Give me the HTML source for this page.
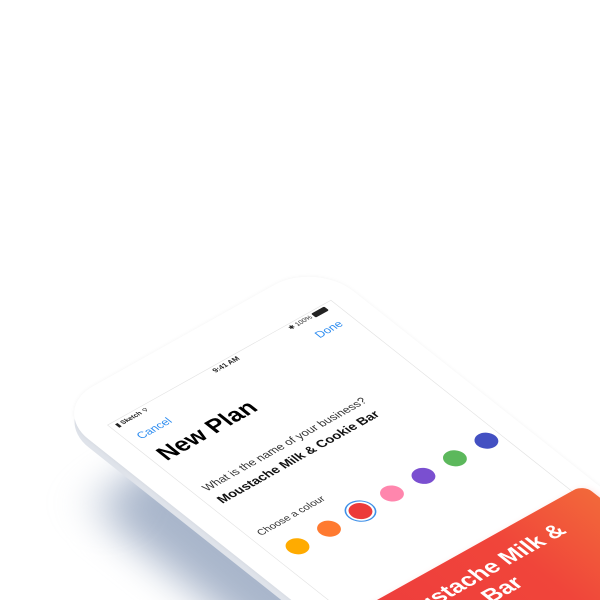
<!DOCTYPE html>
<html><head><style>
html,body{margin:0;padding:0;width:600px;height:600px;overflow:hidden;background:#fff;font-family:"Liberation Sans",sans-serif}
#v{position:relative;width:600px;height:600px;overflow:hidden}
#w{position:absolute;left:107px;top:425px;width:0;height:0;transform-origin:0 0;transform:matrix(0.594,-0.332,0.53,0.42,0,0)}
.a{position:absolute;white-space:nowrap}
.c{position:absolute;width:30px;height:30px;border-radius:50%;top:303px}
</style></head><body>
<div id="v">
<div id="w">
 <div class="a" style="left:-10px;top:-20px;width:420px;height:900px;border-radius:70px;background:#a9b6cb;filter:blur(30px);transform:translate(-110px,110px)"></div>
 <div class="a" style="left:-36px;top:-65px;width:446px;height:900px;border-radius:70px;background:#dfe3ea;transform:translate(-10px,12px)"></div>
 <div class="a" style="left:-36px;top:-65px;width:446px;height:900px;border-radius:70px;background:#fff;box-shadow:0 0 6px rgba(0,0,0,0.05)"></div>
 <div class="a" style="left:0;top:0;width:375px;height:812px;border:1px solid #e2e2e2;background:#fff"></div>
 <div class="a" style="left:8px;top:3px;font-size:10px;font-weight:bold;color:#222">▮ Sketch ⌔</div>
 <div class="a" style="left:172px;top:3px;font-size:11px;font-weight:bold;color:#222">9:41 AM</div>
 <div class="a" style="left:300px;top:3px;font-size:10px;color:#222">✱ 100% <span style="display:inline-block;width:22px;height:9px;background:#222;border-radius:2px;vertical-align:middle"></span></div>
 <div class="a" style="left:16px;top:32px;font-size:17px;color:#2d8cf0">Cancel</div>
 <div class="a" style="left:318px;top:30px;font-size:17px;color:#2d8cf0">Done</div>
 <div class="a" style="left:14px;top:66px;font-size:35px;font-weight:bold;color:#000">New Plan</div>
 <div class="a" style="left:16px;top:156px;font-size:17px;color:#333">What is the name of your business?</div>
 <div class="a" style="left:16px;top:184px;font-size:19px;font-weight:bold;color:#111">Moustache Milk &amp; Cookie Bar</div>
 <div class="a" style="left:14px;top:262px;font-size:15px;color:#333">Choose a colour</div>
 <div class="c" style="left:22px;background:#ffab00"></div>
 <div class="c" style="left:75px;background:#ff7a30"></div>
 <div class="c" style="left:128px;background:#ec3a3a;box-shadow:0 0 0 3px #fff,0 0 0 5px #3d8fe8"></div>
 <div class="c" style="left:181px;background:#ff86ad"></div>
 <div class="c" style="left:234px;background:#7a4fd0"></div>
 <div class="c" style="left:287px;background:#5cb85c"></div>
 <div class="c" style="left:340px;background:#4350c2"></div>
 <div class="a" style="left:16px;top:455px;width:380px;height:300px;border-radius:16px;background:linear-gradient(90deg,#ee3d3d,#f0453a 60%,#f2683a);box-shadow:0 4px 10px rgba(240,70,60,0.2)"></div>
 <div class="a" style="left:34px;top:478px;font-size:34px;font-weight:bold;color:#fff;line-height:40px;white-space:normal;width:340px">Moustache Milk &amp; Cookie Bar</div>
</div>
</div>
</body></html>
